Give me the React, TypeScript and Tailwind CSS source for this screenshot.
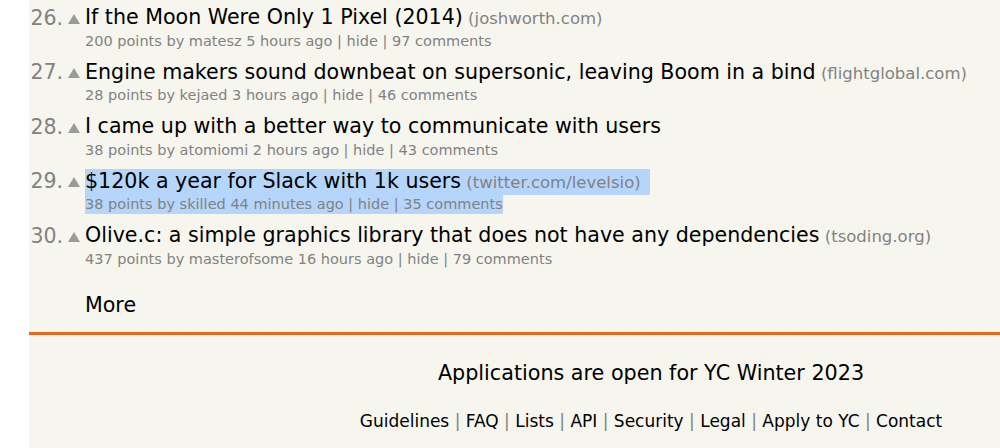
import React from "react";

type Item = {
  rank: number;
  title: string;
  site?: string;
  points: number;
  user: string;
  age: string;
  comments: number;
  selected?: boolean;
};

const items: Item[] = [
  { rank: 26, title: "If the Moon Were Only 1 Pixel (2014)", site: "joshworth.com", points: 200, user: "matesz", age: "5 hours ago", comments: 97 },
  { rank: 27, title: "Engine makers sound downbeat on supersonic, leaving Boom in a bind", site: "flightglobal.com", points: 28, user: "kejaed", age: "3 hours ago", comments: 46 },
  { rank: 28, title: "I came up with a better way to communicate with users", points: 38, user: "atomiomi", age: "2 hours ago", comments: 43 },
  { rank: 29, title: "$120k a year for Slack with 1k users", site: "twitter.com/levelsio", points: 38, user: "skilled", age: "44 minutes ago", comments: 35, selected: true },
  { rank: 30, title: "Olive.c: a simple graphics library that does not have any dependencies", site: "tsoding.org", points: 437, user: "masterofsome", age: "16 hours ago", comments: 79 },
];

function Arrow() {
  return (
    <svg width="12" height="10" viewBox="0 0 12 10" className="block">
      <polygon points="6,0 12,10 0,10" fill="#9a9a9a" />
    </svg>
  );
}

function Row({ it }: { it: Item }) {
  const sel = it.selected ? "bg-[#b5d5fb]" : "";
  return (
    <div>
      <div className="flex h-[25px] items-center">
        <span className="w-[34px] text-right text-[20.5px] leading-[25px] text-[#828282]">{it.rank}.</span>
        <span className="flex w-[22px] justify-center pt-[1px]">
          <Arrow />
        </span>
        <span className={`inline-block whitespace-nowrap leading-[25px] ${sel} ${it.selected ? "pr-[9px]" : ""}`}>
          <span className="text-[20.6px] text-black">{it.title}</span>
          {it.site && (
            <span className="text-[16.5px] text-[#828282]"> ({it.site})</span>
          )}
        </span>
      </div>
      <div className="ml-[56px] flex h-[20px]">
        <span className={`inline-block whitespace-nowrap text-[14.5px] leading-[20px] text-[#828282] ${sel}`}>
          {it.points} points by {it.user} {it.age} | hide | {it.comments} comments
        </span>
      </div>
      <div className="h-[9.5px]" />
    </div>
  );
}

const links = ["Guidelines", "FAQ", "Lists", "API", "Security", "Legal", "Apply to YC", "Contact"];

export default function App() {
  return (
    <div className="h-[448px] w-[1000px] overflow-hidden bg-white font-['DejaVu_Sans',sans-serif]">
      <div className="ml-[29px] h-[448px] w-[1244px] bg-[#f6f6ef]">
        <div className="pt-[5.5px]">
          {items.map((it) => (
            <Row key={it.rank} it={it} />
          ))}
        </div>
        <div className="ml-[56px] mt-[15px] text-[20.6px] leading-[25px] text-black">More</div>
        <div className="mt-[14px] h-[3px] w-full bg-[#e8671c]" />
        <div className="mt-[26px] text-center text-[20.7px] leading-[25px] text-black">
          Applications are open for YC Winter 2023
        </div>
        <div className="mt-[24px] text-center text-[17px] leading-[22px] text-black">
          {links.map((l, i) => (
            <React.Fragment key={l}>
              {i > 0 && <span className="text-[#828282]"> | </span>}
              <span>{l}</span>
            </React.Fragment>
          ))}
        </div>
      </div>
    </div>
  );
}
